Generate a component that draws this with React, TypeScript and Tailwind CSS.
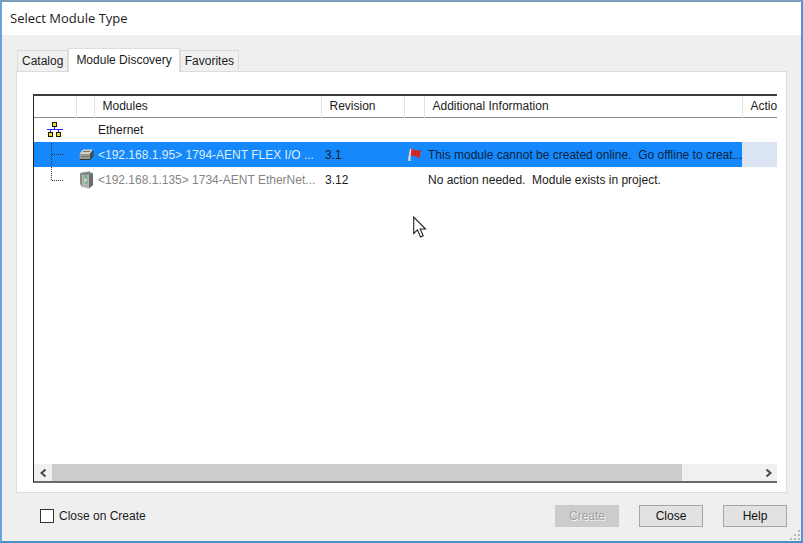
import { useState } from "react";

function NetworkIcon() {
  return (
    <svg className="block" width="16" height="17" viewBox="0 0 16 17" shapeRendering="crispEdges" aria-hidden="true">
      <g fill="#2222ff">
        <rect x="7" y="6" width="1" height="3" />
        <rect x="0" y="8" width="16" height="1" />
        <rect x="3" y="9" width="1" height="2" />
        <rect x="11" y="9" width="1" height="2" />
      </g>
      <g fill="#1a1a00">
        <rect x="5" y="1" width="5" height="5" />
        <rect x="1" y="11" width="5" height="5" />
        <rect x="9" y="11" width="5" height="5" />
      </g>
      <g fill="#f2d632">
        <rect x="6" y="2" width="3" height="3" />
        <rect x="2" y="12" width="3" height="3" />
        <rect x="10" y="12" width="3" height="3" />
      </g>
    </svg>
  );
}

function FlexModuleIcon() {
  return (
    <svg className="block" width="15" height="13" viewBox="0 0 15 13" aria-hidden="true">
      <path d="M0.5 6 4 1.5h10L11 6z" fill="#d2d0c8" />
      <path d="M0.5 6H11v5.5H2L0.5 10z" fill="#98968f" />
      <path d="M11 6l3-4.500 .5 6L11 11.500z" fill="#4c4a48" />
      <path d="M1 11.500h10l3.500-4" stroke="#3a3632" fill="none" />
      <path d="M4 3.500h7M2.500 8.500h6" stroke="#77756f" />
      <path d="M8 8.500h2" stroke="#3fae54" strokeWidth="1.500" />
    </svg>
  );
}

function PointModuleIcon() {
  return (
    <svg className="block" width="15" height="18" viewBox="0 0 15 18" aria-hidden="true">
      <path d="M1 2l9-1.500 4 2V14l-4 3.500-7-1.500z" fill="#b6b8b6" />
      <path d="M10 3l4-.5V14l-4 3.500z" fill="#6a6c6d" />
      <path d="M1 2l2 2v12l-2-3z" fill="#8a8c8c" />
      <path d="M1 2l9-1.500 4 2L10 4 3 4z" fill="#85888a" />
      <path d="M5 5.500h3v9l-3-.5z" fill="#e6eae6" stroke="#8a8a8a" strokeWidth=".7" />
      <path d="M6.500 4v4M7 10v3" stroke="#45c566" strokeWidth="1.600" />
    </svg>
  );
}

function FlagIcon() {
  return (
    <svg className="block" width="16" height="15" viewBox="0 0 16 15" aria-hidden="true">
      <path d="M4 2 2 13" stroke="#e8e2ee" strokeWidth="2" />
      <path d="M1.500 11.500h3M1 13.500h3" stroke="#b9cdf0" />
      <path d="M4.500 1.500c2 0 2.500 2 4.500 2 2 0 2.500-.5 5 0l-1.500 8c-2 0-2.500-2.500-4.500-2.500-1.500 0-3 0-4.500-.5z" fill="#d92c20" />
      <path d="M8.500 3.500 8 9M12 4l-1 6" stroke="#b0252a" />
    </svg>
  );
}

function TreeBranch({ last = false }: { last?: boolean }) {
  return (
    <svg className="block" width="43" height="25" viewBox="0 0 43 25" aria-hidden="true">
      <path
        d={last ? "M17.500 0V13M18 13.500H30" : "M17.500 1V25M18 12.500H30"}
        fill="none"
        stroke="#303840"
        strokeWidth="1"
        strokeDasharray="1 1"
      />
    </svg>
  );
}

function Chevron({ flip = false }: { flip?: boolean }) {
  return (
    <svg width="8" height="10" viewBox="0 0 8 10" aria-hidden="true">
      <path d={flip ? "M1.500 1.500 5.500 5 1.500 8.500" : "M6.500 1.500 2.500 5 6.500 8.500"} fill="none" stroke="#484848" strokeWidth="2" />
    </svg>
  );
}

function Pointer() {
  return (
    <svg className="pointer-events-none absolute left-[411px] top-[214px]" width="14" height="23" viewBox="0 0 14 23" aria-hidden="true">
      <path d="M.7 1v16.500l3.800-3.600 3 7 2.700-1.200-3-6.700h5.300z" fill="#fff" stroke="#222" strokeWidth="1.100" />
    </svg>
  );
}

const tabs = ["Catalog", "Module Discovery", "Favorites"];
const headers = ["", "", "Modules", "Revision", "", "Additional Information", "Action"];
const cell = "whitespace-pre py-0 pl-1 pr-0";
const button =
  "h-[22px] w-16 border border-[#a5a5a5] bg-[#e2e2e2] text-[#111] disabled:border-[#c9c9c9] disabled:bg-[#cccccc] disabled:text-[#a0a0a0] disabled:[text-shadow:1px_1px_0_#f4f4f4]";

export default function App() {
  const [active, setActive] = useState("Module Discovery");
  const [closeOnCreate, setCloseOnCreate] = useState(false);

  return (
    <main className="relative flex min-h-screen flex-col border-2 border-t-[#7d9dbd] border-r-[#4f93dd] border-b-[#4b8fc6] border-l-[#68a3d5] bg-[#efefef] font-['Liberation_Sans',Arial,sans-serif] text-[12px] leading-4 text-[#1c1c1c]">
      <header className="flex h-[33px] items-center bg-white px-2 pb-[2px]">
        <h1 className="font-['Open_Sans','Noto_Sans',sans-serif] text-[13px] leading-4">Select Module Type</h1>
      </header>

      <section className="flex flex-1 flex-col px-[14px] pt-3">
        <div role="tablist" className="z-10 -mb-px flex h-[25px] items-end pl-px">
          {tabs.map((tab) => (
            <button
              key={tab}
              type="button"
              role="tab"
              aria-selected={active === tab}
              onClick={() => setActive(tab)}
              className={
                active === tab
                  ? "h-6 border border-b-0 border-[#dcdcdc] bg-white px-[7px] pb-[2px]"
                  : "mb-px h-[21px] border border-b-0 border-[#dadada] bg-[#f0f0f0] px-1"
              }
            >
              {tab}
            </button>
          ))}
        </div>

        <div role="tabpanel" className="flex flex-1 flex-col border border-[#dcdcdc] bg-white pt-[22px] pr-[9px] pb-[9px] pl-4">
          <div className="flex flex-1 flex-col overflow-hidden border-t-2 border-b-2 border-l border-t-[#3c3c3c] border-b-[#696969] border-l-[#222]">
            <div className="flex-1 overflow-hidden">
              <table className="w-[860px] table-fixed border-collapse text-left">
                <colgroup>
                  <col className="w-[42px]" />
                  <col className="w-[18px]" />
                  <col className="w-[227px]" />
                  <col className="w-[83px]" />
                  <col className="w-[20px]" />
                  <col className="w-[318px]" />
                  <col />
                </colgroup>
                <thead>
                  <tr className="h-[21px] border-b border-[#8b8b8b]">
                    {headers.map((header, index) => (
                      <th key={index} scope="col" className="border-r border-r-[#e2e2e2] px-2 py-0 font-normal">
                        {header}
                      </th>
                    ))}
                  </tr>
                </thead>
                <tbody>
                  <tr className="h-[25px]">
                    <td className="py-0 pl-[13px]">
                      <NetworkIcon />
                    </td>
                    <td />
                    <td className={cell}>Ethernet</td>
                    <td colSpan={4} />
                  </tr>
                  <tr aria-selected="true" className="h-[25px] bg-[#1589fb]">
                    <td className="p-0">
                      <TreeBranch />
                    </td>
                    <td className="px-[3px] py-0">
                      <FlexModuleIcon />
                    </td>
                    <td className={`${cell} text-[#dcecff]`}>&lt;192.168.1.95&gt; 1794-AENT FLEX I/O ...</td>
                    <td className={cell}>3.1</td>
                    <td className="px-[3px] py-0">
                      <FlagIcon />
                    </td>
                    <td className={`${cell} text-[#0c2340]`}>{"This module cannot be created online.  Go offline to creat..."}</td>
                    <td className="bg-[#dbe4f3]" />
                  </tr>
                  <tr className="h-[25px]">
                    <td className="p-0">
                      <TreeBranch last />
                    </td>
                    <td className="px-[3px] py-0">
                      <PointModuleIcon />
                    </td>
                    <td className={`${cell} text-[#858585]`}>&lt;192.168.1.135&gt; 1734-AENT EtherNet...</td>
                    <td className={cell}>3.12</td>
                    <td />
                    <td className={cell}>{"No action needed.  Module exists in project."}</td>
                    <td />
                  </tr>
                </tbody>
              </table>
            </div>
            <div className="flex h-[17px] bg-[#f0f0f0]">
              <button type="button" aria-label="Scroll left" className="flex w-[18px] items-center justify-center">
                <Chevron />
              </button>
              <div className="flex-1">
                <div className="h-full w-[89%] bg-[#cccccc]" />
              </div>
              <button type="button" aria-label="Scroll right" className="flex w-[17px] items-center justify-center">
                <Chevron flip />
              </button>
            </div>
          </div>
        </div>
      </section>

      <footer className="flex h-12 items-center gap-5 pr-[14px] pb-[2px] pl-[38px]">
        <label className="mr-auto flex items-center gap-[5px]">
          <input
            type="checkbox"
            checked={closeOnCreate}
            onChange={(event) => setCloseOnCreate(event.target.checked)}
            className="size-[14px] appearance-none border border-[#333] bg-white checked:bg-[#333]"
          />
          Close on Create
        </label>
        <button type="button" disabled className={button}>
          Create
        </button>
        <button type="button" className={button}>
          Close
        </button>
        <button type="button" className={button}>
          Help
        </button>
      </footer>

      <svg className="absolute right-px bottom-px" width="10" height="10" viewBox="0 0 10 10" fill="#b8b8b8" aria-hidden="true">
        <path d="M8 0h2v2H8zM8 4h2v2H8zM8 8h2v2H8zM4 4h2v2H4zM4 8h2v2H4zM0 8h2v2H0z" />
      </svg>
      <Pointer />
    </main>
  );
}
